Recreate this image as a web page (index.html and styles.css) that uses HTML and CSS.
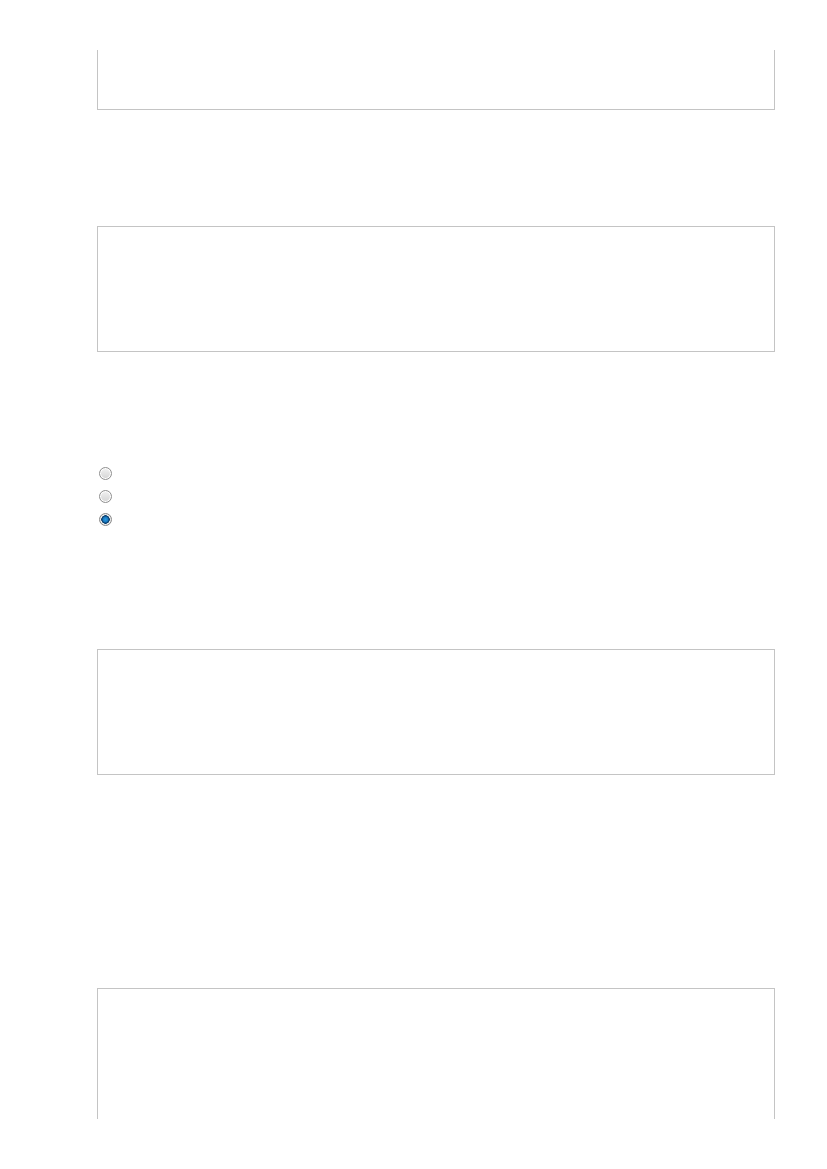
FILE: index.html
```html
<!DOCTYPE html>
<html lang="en">
<head>
  <meta charset="UTF-8" />
  <meta name="viewport" content="width=device-width, initial-scale=1.0"/>
  <title>Form</title>
  <link rel="stylesheet" href="styles.css">
</head>
<body>

  <div class="viewport">
    <div class="content">

      <div class="field-box"></div>

      <div class="field-box box-two"></div>

      <div class="radio-group">
        <label class="radio-row"><input type="radio" name="choice"></label>
        <label class="radio-row"><input type="radio" name="choice"></label>
        <label class="radio-row"><input type="radio" name="choice" checked></label>
      </div>

      <div class="field-box box-three"></div>

      <div class="field-box box-four tall"></div>

    </div>
  </div>

</body>
</html>
```

FILE: styles.css
```css
:root {
  --border: #c4c4c4;
  --white: #fff;
}
body {
  margin: 0;
  padding: 0;
  background: var(--white);
  font-family: 'Liberation Sans', Arial, sans-serif;
}
.viewport {
  margin-top: 50px;
  height: 1069px;
  overflow: hidden;
}
.content {
  margin-top: -66px;
  padding: 0 52px 0 97px;
}
.field-box {
  height: 124px;
  border: 1px solid var(--border);
  background: var(--white);
}
.box-two {
  margin-top: 116px;
}
.box-three {
  margin-top: 122px;
}
.box-four {
  margin-top: 213px;
}
.tall {
  height: 300px;
}
.radio-group {
  margin-top: 115px;
  display: flex;
  flex-direction: column;
  gap: 9px;
  padding-left: 2px;
}
.radio-row {
  display: block;
  height: 14px;
  line-height: 0;
}
.radio-row input {
  -webkit-appearance: none;
  appearance: none;
  width: 13px;
  height: 13px;
  margin: 0;
  border: 1px solid #8f8f8f;
  border-radius: 50%;
  background: linear-gradient(#f2f2f2, #d4d4d4);
  box-shadow: inset 0 0 0 1px #fff;
}
.radio-row input:checked {
  border-color: #8a8a8a;
  background: radial-gradient(circle, #2b9be0 0, #1778c0 2.5px, #0b3f6e 3.5px, #0b3f6e 4px, #f2f2f2 4.5px, #d8d8d8 6px);
  box-shadow: none;
}
```
